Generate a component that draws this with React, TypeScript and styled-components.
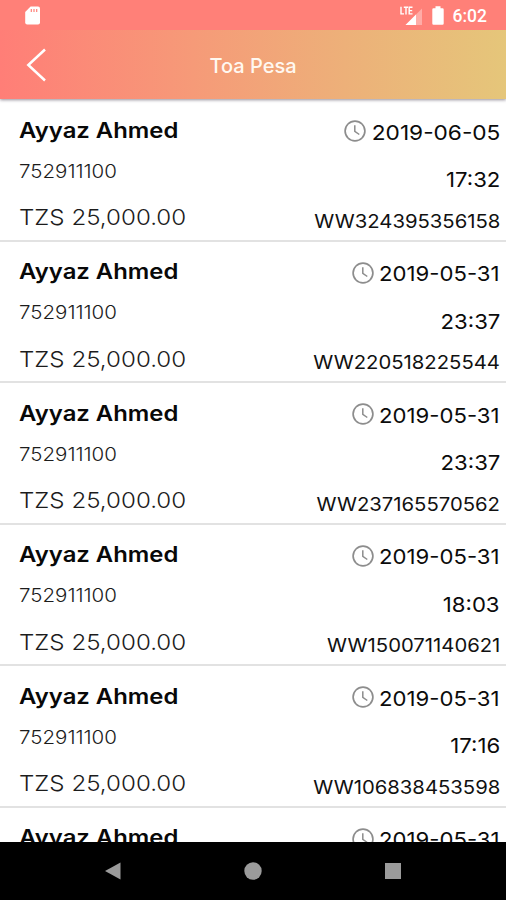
import React from "react";
import styled, { createGlobalStyle } from "styled-components";

const GlobalStyle = createGlobalStyle`
  * { box-sizing: border-box; }
  body { margin: 0; background: #fff; font-family: Inter, "Liberation Sans", sans-serif; }
`;

const Screen = styled.div`
  display: flex;
  flex-direction: column;
  width: 506px;
  height: 900px;
  overflow: hidden;
  background: #fff;
`;

const StatusBar = styled.div`
  flex: none;
  display: flex;
  align-items: center;
  height: 30px;
  padding: 1px 19px 0 25px;
  background: #ff8078;
  color: #fff;
`;

const StatusIcons = styled.div`
  display: flex;
  align-items: center;
  gap: 9px;
  margin-left: auto;
`;

const StatusTime = styled.span`
  font: 500 17.5px/30px Roboto, sans-serif;
`;

const Header = styled.header`
  flex: none;
  display: grid;
  grid-template-columns: 73px 1fr 73px;
  align-items: center;
  height: 69px;
  background: linear-gradient(90deg, #ff7e77 0%, #f69a78 38%, #edb079 68%, #e5c67a 100%);
  box-shadow: 0 1px 3px rgba(60, 50, 70, 0.55);
  clip-path: inset(0 0 -6px 0);
  color: #fff8f0;
  z-index: 1;
`;

const BackButton = styled.button`
  display: flex;
  padding: 0 0 0 25px;
  border: 0;
  background: none;
`;

const Title = styled.h1`
  margin: 3px 0 0;
  text-align: center;
  font-size: 20px;
  font-weight: 500;
  line-height: 24px;
`;

const List = styled.main`
  flex: 1;
  min-height: 0;
  overflow: hidden;
  padding-top: 1px;
`;

const Row = styled.article`
  display: flex;
  justify-content: space-between;
  height: 141.5px;
  padding: 0 6px 0 19px;
  border-bottom: 2px solid #e2e2e2;
`;

const Column = styled.div<{ $end?: boolean }>`
  display: flex;
  flex-direction: column;
  align-items: ${(p) => (p.$end ? "flex-end" : "flex-start")};
  padding-top: ${(p) => (p.$end ? 17.5 : 14.5)}px;
  white-space: nowrap;
`;

const Text = styled.span<{ $end?: boolean; $stretch: number }>`
  display: block;
  line-height: 30px;
  transform: scaleX(${(p) => p.$stretch});
  transform-origin: ${(p) => (p.$end ? "right" : "left")} center;
`;

const Name = styled(Text)`
  font-size: 21.5px;
  font-weight: 600;
  color: #080808;
`;

const Phone = styled(Text)`
  margin-top: 12px;
  font-size: 18px;
  font-weight: 300;
  color: #1c1c1c;
`;

const Amount = styled(Text)`
  margin-top: 15.5px;
  font-size: 22px;
  font-weight: 300;
  color: #1c1c1c;
`;

const DateLine = styled.div`
  display: flex;
  align-items: center;
  height: 30px;
`;

const ClockSvg = styled.svg`
  margin-bottom: 3px;
`;

const DateBox = styled.div<{ $width: number }>`
  display: flex;
  justify-content: flex-end;
  width: ${(p) => p.$width}px;
  margin-left: 6px;
`;

const Stamp = styled(Text)`
  font-size: 20.5px;
  font-weight: 400;
  color: #0b0b0b;
`;

const Time = styled(Stamp)`
  margin-top: 17.5px;
`;

const Reference = styled(Text)`
  margin-top: 11.5px;
  font-size: 19px;
  font-weight: 400;
  color: #111;
`;

const NavBar = styled.nav`
  flex: none;
  display: flex;
  justify-content: center;
  gap: 122px;
  align-items: center;
  height: 58px;
  background: #000;
`;

const ClockIcon = () => (
  <ClockSvg width="22" height="22" viewBox="0 0 22 22" fill="none" stroke="#8d8d8d">
    <circle cx="11" cy="11" r="9.9" strokeWidth="1.7" />
    <path d="M10.8 5.2v6.1l4.5 3.2" strokeWidth="1.5" />
  </ClockSvg>
);

const transactions = [
  { date: "2019-06-05", time: "17:32", id: "WW324395356158", width: 128, stretch: 1.105 },
  { date: "2019-05-31", time: "23:37", id: "WW220518225544", width: 120, stretch: 1.08 },
  { date: "2019-05-31", time: "23:37", id: "WW237165570562", width: 120, stretch: 1.08 },
  { date: "2019-05-31", time: "18:03", id: "WW150071140621", width: 120, stretch: 1.08 },
  { date: "2019-05-31", time: "17:16", id: "WW106838453598", width: 120, stretch: 1.08 },
  { date: "2019-05-31", time: "17:16", id: "WW106838453598", width: 120, stretch: 1.08 },
];

export default function App() {
  return (
    <>
      <GlobalStyle />
      <Screen>
        <StatusBar>
          <svg width="16" height="19" viewBox="0 0 16 19">
            <path d="M5.6.5H13a2 2 0 0 1 2 2v14a2 2 0 0 1-2 2H2.2a2 2 0 0 1-2-2V6z" fill="#fff" />
            <path d="M6.3 3v3M9 3v3M11.7 3v3" stroke="#ff8078" strokeWidth="1.2" />
          </svg>
          <StatusIcons>
            <svg width="23" height="20" viewBox="0 0 23 20">
              <path d="M22 2.5V19H5.5z" fill="#fff" opacity=".35" />
              <path d="M16 8.5V19H5.5z" fill="#fff" />
              <path d="M1 .7v7.2h3M3.8 1.3H8M6 1.3V8.5M12.5 1.3H9.2v6.6h3.3M9.2 4.6h3" fill="none" stroke="#fff" strokeWidth="1.4" />
            </svg>
            <svg width="12" height="19" viewBox="0 0 12 19">
              <path d="M3.5.3h5v2h2q1.2 0 1.2 1.2v14q0 1.2-1.2 1.2h-9Q.3 18.7 .3 17.5v-14q0-1.2 1.2-1.2h2z" fill="#fff" />
            </svg>
            <StatusTime>6:02</StatusTime>
          </StatusIcons>
        </StatusBar>
        <Header>
          <BackButton aria-label="Back">
            <svg width="22" height="34" viewBox="0 0 22 34">
              <path d="M20 1.5 3.3 17 20 32.5" fill="none" stroke="#fff" strokeWidth="2.5" />
            </svg>
          </BackButton>
          <Title>Toa Pesa</Title>
        </Header>
        <List>
          {transactions.map((t, i) => (
            <Row key={i}>
              <Column>
                <Name $stretch={1.11}>Ayyaz Ahmed</Name>
                <Phone $stretch={1.14}>752911100</Phone>
                <Amount $stretch={1.097}>TZS 25,000.00</Amount>
              </Column>
              <Column $end>
                <DateLine>
                  <ClockIcon />
                  <DateBox $width={t.width}>
                    <Stamp $end $stretch={t.stretch}>{t.date}</Stamp>
                  </DateBox>
                </DateLine>
                <Time $end $stretch={1.08}>{t.time}</Time>
                <Reference $end $stretch={1.067}>{t.id}</Reference>
              </Column>
            </Row>
          ))}
        </List>
        <NavBar>
          <svg width="18" height="18" viewBox="0 0 18 18"><path d="M1 9 16.5 .5v17z" fill="#9b9b9b" /></svg>
          <svg width="18" height="18" viewBox="0 0 18 18"><circle cx="9" cy="9" r="8.7" fill="#9b9b9b" /></svg>
          <svg width="18" height="18" viewBox="0 0 18 18"><path d="M1 1h16v16H1z" fill="#9b9b9b" /></svg>
        </NavBar>
      </Screen>
    </>
  );
}
